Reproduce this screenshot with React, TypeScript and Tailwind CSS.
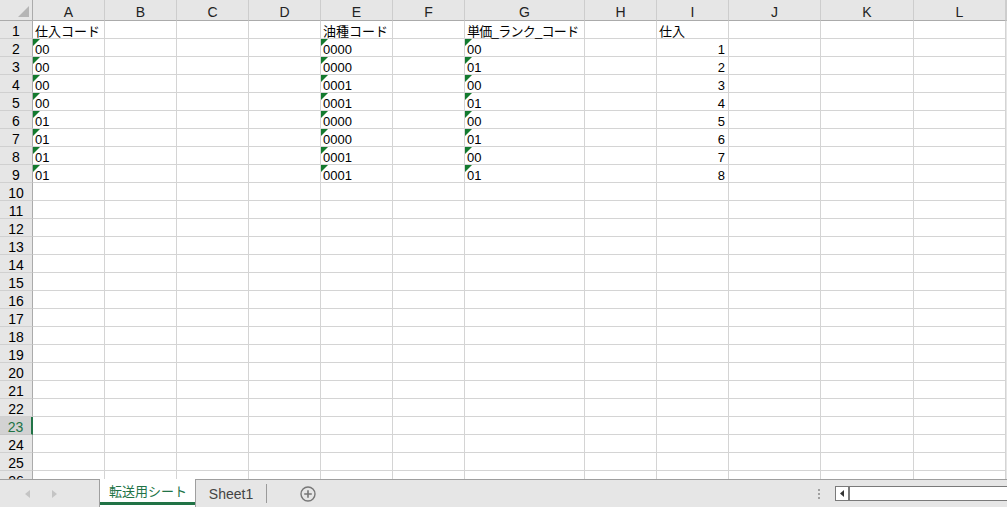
import React from "react";

const COLS = ["A", "B", "C", "D", "E", "F", "G", "H", "I", "J", "K", "L", ""];
const ROW_COUNT = 26;
const SELECTED_ROW = 23;

const colA = ["00", "00", "00", "00", "01", "01", "01", "01"];
const colE = ["0000", "0000", "0001", "0001", "0000", "0000", "0001", "0001"];
const colG = ["00", "01", "00", "01", "00", "01", "00", "01"];

type CellData = { text: string; tri?: boolean; right?: boolean; tight?: boolean };

const getCell = (row: number, col: string): CellData | null => {
  if (row === 1) {
    if (col === "A") return { text: "仕入コード" };
    if (col === "E") return { text: "油種コード" };
    if (col === "G") return { text: "単価_ランク_コード", tight: true };
    if (col === "I") return { text: "仕入" };
    return null;
  }
  const i = row - 2;
  if (i < 0 || i > 7) return null;
  if (col === "A") return { text: colA[i], tri: true };
  if (col === "E") return { text: colE[i], tri: true };
  if (col === "G") return { text: colG[i], tri: true };
  if (col === "I") return { text: String(i + 1), right: true };
  return null;
};

const Cell: React.FC<{ row: number; col: string }> = ({ row, col }) => {
  const data = getCell(row, col);
  return (
    <div
      className={`relative flex items-center overflow-visible whitespace-nowrap border-r border-b border-[#d4d4d4] bg-white text-[#000] ${
        data?.right ? "justify-end pr-[3px]" : "justify-start pl-[2px]"
      }`}
    >
      {data?.tri && (
        <span className="absolute left-0 top-0 h-0 w-0 border-t-[7px] border-r-[7px] border-t-[#137a2e] border-r-transparent" />
      )}
      {data && (
        <span className={`${data.tight ? "tracking-[-0.7px]" : ""} relative text-[13px] leading-none pt-[3px]`}>
          {data.text}
        </span>
      )}
    </div>
  );
};

const TabBar: React.FC = () => (
  <div className="flex h-[28px] items-stretch border-t border-[#9f9f9f] bg-[#e6e6e6]">
    <div className="flex w-[99px] items-center gap-[20px] pl-[25px] text-[#c4c4c4]">
      <svg width="6" height="8" viewBox="0 0 6 8">
        <path d="M5 0 L0 4 L5 8 Z" fill="currentColor" />
      </svg>
      <svg width="6" height="8" viewBox="0 0 6 8">
        <path d="M1 0 L6 4 L1 8 Z" fill="currentColor" />
      </svg>
    </div>
    <div className="-mt-px flex w-[97px] flex-col border-x border-[#9f9f9f] bg-white">
      <div className="flex flex-1 items-center justify-center pl-[1px] pt-[2px] text-[13px] text-[#217346]">
        転送用シート
      </div>
      <div className="mb-[2px] h-[3px] bg-[#217346]" />
    </div>
    <div className="flex w-[70px] items-center justify-center pt-[1px] text-[14px] text-[#444]">Sheet1</div>
    <div className="my-[4px] w-px bg-[#9a9a9a]" />
    <div className="flex w-[82px] items-center justify-center pt-[1px]">
      <svg width="16" height="16" viewBox="0 0 16 16">
        <circle cx="8" cy="8" r="7" fill="none" stroke="#777" strokeWidth="1.4" />
        <path d="M8 4.2 V11.8 M4.2 8 H11.8" stroke="#777" strokeWidth="1.6" />
      </svg>
    </div>
    <div className="flex-1" />
    <div className="flex w-[16px] flex-col items-center justify-center gap-[2px] pt-[1px]">
      <span className="h-[2px] w-[2px] bg-[#a0a0a0]" />
      <span className="h-[2px] w-[2px] bg-[#a0a0a0]" />
      <span className="h-[2px] w-[2px] bg-[#a0a0a0]" />
    </div>
    <div className="w-[8px]" />
    <div className="my-[6px] flex w-[172px] border border-r-0 border-[#7a7a7a] bg-white">
      <div className="flex w-[14px] items-center justify-center border-r-2 border-[#7a7a7a]">
        <svg width="4" height="7" viewBox="0 0 4 7">
          <path d="M4 0 L0 3.5 L4 7 Z" fill="#333" />
        </svg>
      </div>
      <div className="flex-1" />
    </div>
  </div>
);

export default function App() {
  const rows = Array.from({ length: ROW_COUNT }, (_, i) => i + 1);
  return (
    <div className="h-[507px] w-[1007px] overflow-hidden bg-white font-['Liberation_Sans','Noto_Sans_CJK_JP',sans-serif]">
      <div className="h-[479px] overflow-hidden">
        <div className="grid grid-cols-[33px_72px_72px_72px_72px_72px_72px_120px_72px_72px_92px_93px_92px_1fr] grid-rows-[21px_repeat(26,18px)]">
          <div className="relative border-r border-b border-[#ababab] bg-[#e6e6e6]">
            <span className="absolute bottom-[3px] right-[3px] h-0 w-0 border-b-[11px] border-l-[11px] border-b-[#b5b5b5] border-l-transparent" />
          </div>
          {COLS.map((c, i) => (
            <div
              key={`h${i}`}
              className="flex items-center justify-center border-r border-b border-r-[#cdcdcd] border-b-[#ababab] bg-[#e6e6e6] pt-[3px] text-[14px] leading-none text-[#222]"
            >
              {c}
            </div>
          ))}
          {rows.map((r) => (
            <React.Fragment key={r}>
              {r === SELECTED_ROW ? (
                <div className="flex items-center justify-center border-b border-r-2 border-b-[#c6c6c6] border-r-[#217346] bg-[#d2d2d2] pt-[3px] text-[14px] leading-none text-[#217346]">
                  {r}
                </div>
              ) : (
                <div className="flex items-center justify-center border-r border-b border-r-[#ababab] border-b-[#d0d0d0] bg-[#e6e6e6] pt-[3px] text-[14px] leading-none text-[#000]">
                  {r}
                </div>
              )}
              {COLS.map((c, i) =>
                c ? (
                  <Cell key={`${r}-${i}`} row={r} col={c} />
                ) : (
                  <div key={`${r}-${i}`} className="bg-[#e6e6e6]" />
                )
              )}
            </React.Fragment>
          ))}
        </div>
      </div>
      <TabBar />
    </div>
  );
}
